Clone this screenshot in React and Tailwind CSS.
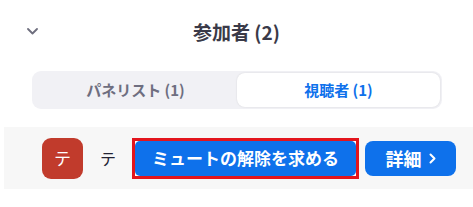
export default function App() {
  return (
    <div className="w-[473px] h-[207px] bg-white font-['Noto_Sans_CJK_JP','Noto_Sans',sans-serif] overflow-hidden">
      <div className="h-[62px] grid grid-cols-[1fr_auto_1fr] items-center">
        <div className="pl-[27px] flex items-center">
          <svg width="11" height="7" viewBox="0 0 11 7" fill="none">
            <path d="M1 1l4.5 4.5L10 1" stroke="#6e6e7e" strokeWidth="1.8" strokeLinecap="round" strokeLinejoin="round" />
          </svg>
        </div>
        <div className="text-[19px] font-bold text-[#3a3a48] leading-none">参加者 (2)</div>
        <div />
      </div>
      <div className="ml-[32px] mr-[31px] mt-[9px] h-[38px] rounded-[9px] bg-[#f1f1f5] p-[2px] flex">
        <div className="flex-1 flex items-center justify-center text-[15px] font-bold text-[#6e6e80]">パネリスト (1)</div>
        <div className="flex-1 flex items-center justify-center rounded-[8px] bg-white shadow-[0_0_2px_rgba(0,0,0,0.12)] text-[15px] font-bold text-[#0e71eb]">視聴者 (1)</div>
      </div>
      <div className="mt-[18px] ml-[4px] h-[62px] bg-[#f7f7f7] flex items-center pl-[38px]">
        <div className="w-[41px] h-[41px] rounded-[9px] bg-[#c13b2c] flex items-center justify-center text-white text-[17px]">テ</div>
        <div className="ml-[17px] text-[16px] text-[#232333]">テ</div>
        <div className="ml-[16px] border-[3px] border-[#e3151d] bg-white">
          <div className="w-[221px] h-[35px] rounded-[5px] bg-[#0e71eb] flex items-center justify-center text-white text-[17px] font-bold">ミュートの解除を求める</div>
        </div>
        <div className="ml-[6px] w-[91px] h-[35px] rounded-[8px] bg-[#0e71eb] flex items-center justify-center gap-[7px] text-white text-[18px] font-bold">
          <span>詳細</span>
          <svg width="7" height="11" viewBox="0 0 7 11" fill="none">
            <path d="M1.5 1.5l4 4-4 4" stroke="white" strokeWidth="2" strokeLinecap="round" strokeLinejoin="round" />
          </svg>
        </div>
      </div>
    </div>
  );
}
